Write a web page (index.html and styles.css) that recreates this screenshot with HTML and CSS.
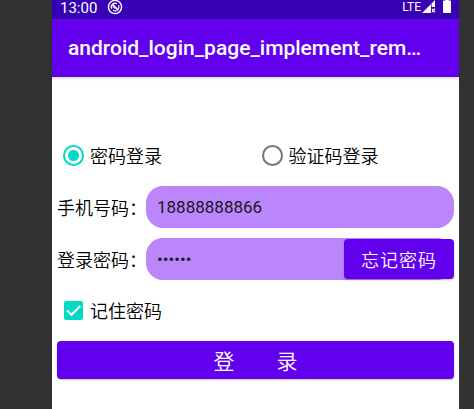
FILE: index.html
```html
<!DOCTYPE html>
<html lang="zh-CN">
<head>
<meta charset="utf-8">
<meta name="viewport" content="width=device-width, initial-scale=1">
<title>android_login_page_implement_rem…</title>
<link rel="stylesheet" href="styles.css">
</head>
<body>
<div class="phone">
  <div class="status">
    <span class="clock">13:00</span>
    <svg class="debug-icon" viewBox="0 0 16 16" width="16" height="16" aria-hidden="true">
      <circle cx="8" cy="8" r="6.6" fill="none" stroke="#fff" stroke-width="1.4"/>
      <path d="M4.6 9.8A3.9 3.9 0 0 1 10 4.7M11.5 6.3A3.9 3.9 0 0 1 11.4 10M9.6 11.6A3.9 3.9 0 0 1 6 11.3" fill="none" stroke="#fff" stroke-width="1.2"/>
      <path d="M5.6 5.6L11.4 11.4" stroke="#fff" stroke-width="1.8"/>
      <path d="M5.4 7.6L7.4 9.6" stroke="#fff" stroke-width="1"/>
    </svg>
    <span class="network">LTE</span>
    <svg class="signal-icon" viewBox="0 0 14 13" width="14" height="13" aria-hidden="true">
      <path d="M0 13L13 0V7H9V13z" fill="#fff"/>
      <path d="M9.6 8.6L13 12.4M13 8.6L9.6 12.4" stroke="#fff" stroke-width="1.3"/>
      <path d="M9.4 4V13" stroke="#3700b3" stroke-width=".7"/>
    </svg>
    <svg class="battery-icon" viewBox="0 0 8 14" width="8" height="14" aria-hidden="true">
      <path d="M2.3 0H5.7V1.5H7.4Q8 1.5 8 2.2V13.3Q8 14 7.4 14H.6Q0 14 0 13.3V2.2Q0 1.5 .6 1.5H2.3z" fill="#fff"/>
    </svg>
  </div>
  <header class="app-bar">
    <h1 class="title">android_login_page_implement_rem…</h1>
  </header>
  <form class="form">
    <div class="modes">
      <label class="choice"><input class="radio" type="radio" name="mode" checked>密码登录</label>
      <label class="choice"><input class="radio" type="radio" name="mode">验证码登录</label>
    </div>
    <div class="row">
      <label class="label" for="phone">手机号码：</label>
      <input class="field" id="phone" type="text" value="18888888866">
    </div>
    <div class="row">
      <label class="label" for="password">登录密码：</label>
      <div class="password">
        <input class="field" id="password" type="password" value="123456">
        <button class="button forgot" type="button">忘记密码</button>
      </div>
    </div>
    <label class="choice remember"><input class="check" type="checkbox" checked>记住密码</label>
    <button class="button login" type="button">登　　录</button>
  </form>
</div>
</body>
</html>
```
FILE: styles.css
```css
* {
  box-sizing: border-box;
}

body {
  margin: 0;
  background: #313332;
  color: #000;
  font-family: Roboto, "Noto Sans CJK SC", sans-serif;
  font-size: 18px;
  font-weight: 350;
}

.phone {
  min-height: 100vh;
  margin: 0 15px 0 52px;
  background: #fff;
}

.status {
  display: flex;
  align-items: flex-start;
  height: 19px;
  padding: 0 8px;
  background: #3700b3;
  color: #fff;
  font-size: 15px;
  font-weight: 400;
  line-height: 16px;
}

.debug-icon {
  margin: -1px 0 0 10px;
}

.network {
  margin-left: auto;
  font-size: 12px;
  line-height: 14px;
}

.signal-icon {
  margin-left: 1px;
}

.battery-icon {
  margin: -1px 0 0 7px;
}

.app-bar {
  display: flex;
  align-items: center;
  height: 58px;
  padding: 0 16px;
  background: #6200ee;
  box-shadow: 0 1px 3px rgba(0, 0, 0, 0.2);
}

.title {
  margin: 0;
  color: #fff;
  font-size: 21px;
  font-weight: 500;
  line-height: 28px;
  white-space: nowrap;
}

.form {
  display: flex;
  flex-direction: column;
  gap: 10px;
  padding: 62px 5px 0;
}

.modes {
  display: grid;
  grid-template-columns: 1fr 1fr;
  margin-bottom: 5px;
}

.choice {
  display: flex;
  align-items: center;
  gap: 6px;
  height: 32px;
  padding-left: 6px;
}

.radio,
.check {
  flex: none;
  margin: 0;
  appearance: none;
}

.radio {
  width: 21px;
  height: 21px;
  border: 2px solid #757575;
  border-radius: 50%;
}

.radio:checked {
  border-color: #03dac5;
  background: radial-gradient(circle, #03dac5 5px, transparent 6px);
}

.check {
  width: 19px;
  height: 19px;
  margin: 1px;
  border-radius: 2px;
  background: #03dac5 url("data:image/svg+xml,%3Csvg xmlns='http://www.w3.org/2000/svg' viewBox='0 0 19 19'%3E%3Cpath d='M3 9.5L7.5 13.8L16.2 5' fill='none' stroke='white' stroke-width='2.1'/%3E%3C/svg%3E");
}

.row {
  display: flex;
  align-items: center;
}

.label {
  flex: none;
  width: 89px;
  white-space: nowrap;
}

.field {
  flex: 1;
  width: 100%;
  min-width: 0;
  height: 42px;
  padding: 0 11px;
  border: 0;
  border-radius: 17px;
  background: #bb86fc;
  color: #1c1624;
  font: inherit;
  font-size: 17px;
  font-weight: 400;
}

.password {
  position: relative;
  display: flex;
  flex: 1;
  min-width: 0;
}

.button {
  border: 0;
  border-radius: 4px;
  background: #6200ee;
  color: #fff;
  font: inherit;
  box-shadow: 0 1px 2px rgba(0, 0, 0, 0.25);
}

.forgot {
  position: absolute;
  top: 1px;
  right: 0;
  width: 110px;
  height: 40px;
  padding: 0;
  letter-spacing: 1px;
}

.remember {
  margin: 4px 0 5px;
}

.login {
  height: 38px;
  padding: 0;
  font-size: 21px;
}
```
